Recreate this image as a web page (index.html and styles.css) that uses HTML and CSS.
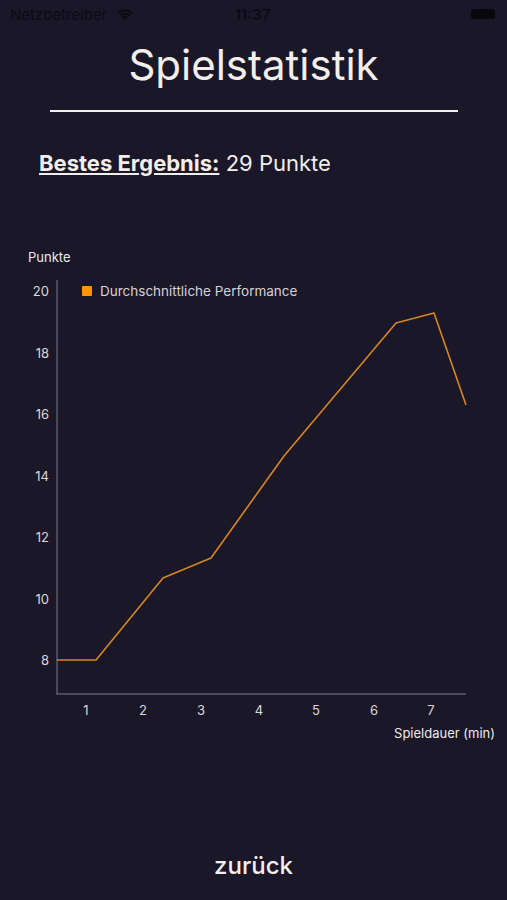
FILE: index.html
```html
<!DOCTYPE html>
<html lang="de">
<head>
    <meta charset="UTF-8">
    <meta name="viewport" content="width=device-width, initial-scale=1.0">
    <title>Spielstatistik</title>
    <link rel="stylesheet" href="styles.css">
</head>
<body>

    <div class="status-bar">
        <div class="carrier">
            <span>Netzbetreiber</span>
            <svg class="wifi" width="20" height="14" viewBox="0 0 20 14">
                <path d="M10 13.5 L6.6 9.9 A5 5 0 0 1 13.4 9.9 Z" fill="#0c0b13"/>
                <path d="M4.6 7.8 A7.8 7.8 0 0 1 15.4 7.8 L14 9.3 A5.8 5.8 0 0 0 6 9.3 Z" fill="#0c0b13"/>
                <path d="M2.2 5.3 A11.2 11.2 0 0 1 17.8 5.3 L16.4 6.8 A9.2 9.2 0 0 0 3.6 6.8 Z" fill="#0c0b13"/>
            </svg>
        </div>
        <span class="clock">11:37</span>
        <div class="battery"></div>
    </div>

    <h1 class="title">Spielstatistik</h1>
    <div class="divider"></div>

    <p class="best-score"><span class="best-label">Bestes Ergebnis:</span> 29 Punkte</p>

    <div class="chart">
        <svg width="507" height="510" viewBox="0 240 507 510">
            <text x="28" y="262" class="axis-title">Punkte</text>

            <g class="tick-labels" text-anchor="end">
                <text x="49" y="296">20</text>
                <text x="49" y="358">18</text>
                <text x="49" y="419">16</text>
                <text x="49" y="481">14</text>
                <text x="49" y="542">12</text>
                <text x="49" y="604">10</text>
                <text x="49" y="665">8</text>
            </g>

            <line x1="57" y1="280" x2="57" y2="694" class="axis"/>
            <line x1="56.5" y1="694" x2="466" y2="694" class="axis"/>

            <g class="tick-labels" text-anchor="middle">
                <text x="86" y="715">1</text>
                <text x="143" y="715">2</text>
                <text x="201" y="715">3</text>
                <text x="259" y="715">4</text>
                <text x="316" y="715">5</text>
                <text x="374" y="715">6</text>
                <text x="431" y="715">7</text>
            </g>
            <text x="495" y="738" text-anchor="end" class="axis-title">Spieldauer (min)</text>

            <rect x="82" y="286" width="10" height="10" rx="1" fill="#ff9500"/>
            <text x="100" y="296" class="legend">Durchschnittliche Performance</text>

            <polyline class="series" points="57,660 96,660 163,578 211,558 284,456 396,323 434,313 466,405"/>
        </svg>
    </div>

    <div class="footer">
        <button class="back-button">zurück</button>
    </div>

</body>
</html>
```

FILE: styles.css
```css
body {
    margin: 0;
    width: 507px;
    height: 900px;
    background-color: #1a1729;
    font-family: Inter, "Noto Sans", sans-serif;
    color: #f2eeea;
    display: flex;
    flex-direction: column;
    overflow: hidden;
}

.status-bar {
    height: 28px;
    display: flex;
    align-items: center;
    justify-content: space-between;
    padding: 0 12px 0 10px;
    color: #0c0b13;
    font-size: 15px;
}

.carrier {
    display: flex;
    align-items: center;
    gap: 8px;
    width: 140px;
}

.clock {
    font-weight: 600;
    width: 60px;
    text-align: center;
}

.battery {
    width: 24px;
    height: 10px;
    border-radius: 3px;
    background-color: #08070c;
    margin-left: 116px;
}

.title {
    margin: 12px 0 0;
    font-size: 42px;
    font-weight: 400;
    line-height: 50px;
    text-align: center;
}

.divider {
    height: 2px;
    margin: 20px 49px 0 50px;
    background-color: #f2eeea;
}

.best-score {
    margin: 38px 0 0 39px;
    font-size: 22px;
    line-height: 26px;
}

.best-label {
    font-weight: 700;
    text-decoration: underline;
    text-underline-offset: 2px;
}

.chart {
    margin-top: 64px;
    height: 510px;
}

.chart svg {
    display: block;
}

.axis-title {
    fill: #eeeaea;
    font-size: 13px;
}

.tick-labels text {
    fill: #dcd8dc;
    font-size: 13px;
}

.legend {
    fill: #d6d2d6;
    font-size: 13.5px;
}

.axis {
    stroke: #5c5a68;
    stroke-width: 1.5;
}

.series {
    fill: none;
    stroke: #d9861c;
    stroke-width: 1.6;
    stroke-linejoin: round;
}

.footer {
    flex: 1;
    display: flex;
    justify-content: center;
}

.back-button {
    margin-top: 100px;
    height: 30px;
    background: none;
    border: none;
    color: #f2eeea;
    font-family: Inter, "Noto Sans", sans-serif;
    font-size: 24px;
    font-weight: 500;
    padding: 0;
    cursor: pointer;
}
```
